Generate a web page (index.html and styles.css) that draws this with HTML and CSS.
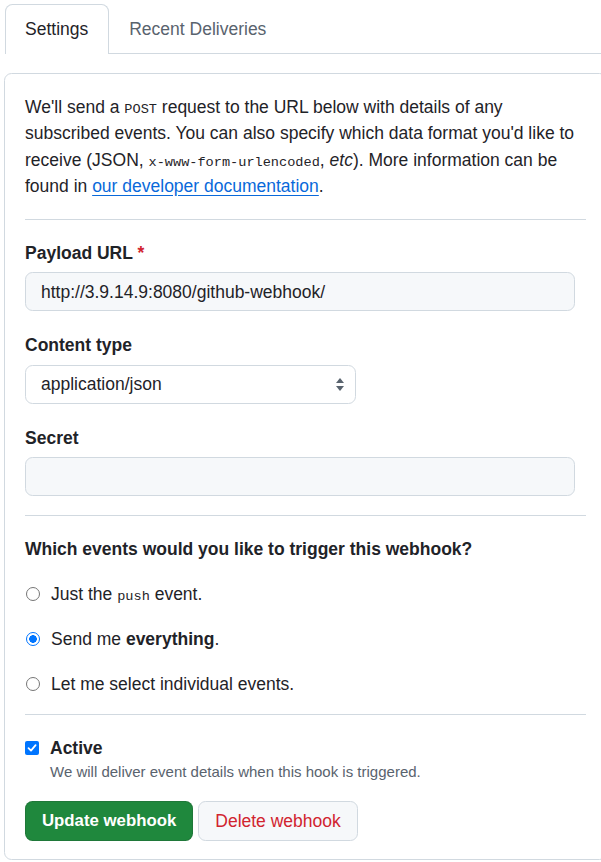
FILE: index.html
```html
<!DOCTYPE html>
<html>
<head>
<meta charset="utf-8">
<link rel="stylesheet" href="styles.css">
</head>
<body>
<div class="page">
  <nav class="tabs">
    <a class="tab selected">Settings</a>
    <a class="tab">Recent Deliveries</a>
  </nav>
  <form class="box">
    <p class="intro">We'll send a <code class="post">POST</code> request to the URL below with details of any subscribed events. You can also specify which data format you'd like to receive (JSON, <code>x-www-form-urlencoded</code>, <em>etc</em>). More information can be found in <a class="link" href="#">our developer documentation</a>.</p>
    <hr class="sep">
    <div class="field">
      <label class="label">Payload URL <span class="req">*</span></label>
      <div class="input">http://3.9.14.9:8080/github-webhook/</div>
    </div>
    <div class="field">
      <label class="label">Content type</label>
      <div class="select">
        <span>application/json</span>
        <svg class="arrows" width="10" height="16" viewBox="0 0 10 16"><path d="M5 2 L9 7 H1 Z" fill="#59636e"/><path d="M5 15 L9 10 H1 Z" fill="#59636e"/></svg>
      </div>
    </div>
    <div class="field">
      <label class="label">Secret</label>
      <div class="input"></div>
    </div>
    <hr class="sep sep2">
    <h3 class="question">Which events would you like to trigger this webhook?</h3>
    <div class="radios">
      <div class="radio-row"><span class="radio"></span><span>Just the <code class="push">push</code> event.</span></div>
      <div class="radio-row"><span class="radio checked"></span><span>Send me <strong>everything</strong>.</span></div>
      <div class="radio-row"><span class="radio"></span><span>Let me select individual events.</span></div>
    </div>
    <hr class="sep sep3">
    <div class="active">
      <span class="checkbox"><svg width="10" height="10" viewBox="0 0 10 10"><path d="M1.5 5.2 L4 7.6 L8.6 2.2" fill="none" stroke="#fff" stroke-width="1.8" stroke-linecap="round" stroke-linejoin="round"/></svg></span>
      <div class="active-text">
        <div class="active-label">Active</div>
        <div class="note">We will deliver event details when this hook is triggered.</div>
      </div>
    </div>
    <div class="buttons">
      <button type="button" class="btn primary">Update webhook</button>
      <button type="button" class="btn danger">Delete webhook</button>
    </div>
  </form>
</div>
</body>
</html>
```
FILE: styles.css
```css
html, body {
  margin: 0;
  padding: 0;
  background: #ffffff;
  overflow: hidden;
}
body {
  font-family: "Liberation Sans", Arial, sans-serif;
  font-size: 17.5px;
  line-height: 26.25px;
  color: #1f2328;
}
.page {
  width: 603px;
  padding: 4px 0 0 4px;
}
.tabs {
  display: flex;
  margin-left: 1px;
  border-bottom: 1px solid #d1d9e0;
}
.tab {
  padding: 11px 20px 11px 19px;
  line-height: 26px;
  border: 1px solid transparent;
  border-bottom: 0;
  border-radius: 7.5px 7.5px 0 0;
  color: #59636e;
  margin-bottom: -1px;
}
.tab.selected {
  color: #1f2328;
  border-color: #d1d9e0;
  background: #fff;
  padding-bottom: 12px;
}
.box {
  display: block;
  margin-top: 19px;
  border: 1px solid #d1d9e0;
  border-radius: 7.5px;
  padding: 20px 20px 18px 20px;
}
.intro {
  margin: 0;
}
code {
  font-family: "Liberation Mono", "DejaVu Sans Mono", monospace;
  font-size: 13.6px;
  line-height: 1;
}
.link {
  color: #0969da;
  text-decoration: underline;
  text-underline-offset: 3px;
}
.sep {
  border: 0;
  border-top: 1px solid #d1d9e0;
  margin: 20px 0 20px 0;
}
.field {
  margin-bottom: 21px;
}
.label {
  display: block;
  font-weight: bold;
  margin-bottom: 6px;
}
.req {
  color: #d1242f;
}
.input {
  width: 550px;
  height: 39px;
  box-sizing: border-box;
  border: 1px solid #d1d9e0;
  border-radius: 7.5px;
  background: #f6f8fa;
  padding: 0 15px;
  display: flex;
  align-items: center;
}
.select {
  width: 331px;
  height: 39px;
  box-sizing: border-box;
  border: 1px solid #d1d9e0;
  border-radius: 7.5px;
  background: #fff;
  padding: 0 10px 0 15px;
  display: flex;
  align-items: center;
  justify-content: space-between;
}
.sep2 {
  margin-top: -2px;
}
.question {
  margin: 0;
  font-size: 17.5px;
  font-weight: bold;
}
.radios {
  display: flex;
  flex-direction: column;
  gap: 18.6px;
  margin-top: 19px;
}
.radio-row {
  display: flex;
  align-items: center;
  gap: 11px;
}
.radio {
  width: 14px;
  height: 14px;
  box-sizing: border-box;
  border: 1px solid #767676;
  border-radius: 50%;
  margin-left: 1px;
}
.radio.checked {
  border: 1.5px solid #0075ff;
  background: radial-gradient(circle, #0075ff 0 3.6px, #fff 4px);
}
.sep3 {
  margin-top: 17px;
}
.active {
  display: flex;
  gap: 11px;
}
.checkbox {
  width: 14px;
  height: 14px;
  margin-top: 6px;
  background: #0075ff;
  border-radius: 2px;
  display: flex;
  align-items: center;
  justify-content: center;
}
.active-label {
  font-weight: bold;
}
.note {
  font-size: 15px;
  line-height: 22px;
  color: #59636e;
}
.buttons {
  display: flex;
  gap: 5px;
  margin-top: 18px;
}
.btn {
  height: 40px;
  padding: 0 16px;
  border-radius: 7.5px;
  font-family: inherit;
  font-size: 17.5px;
  font-weight: bold;
  box-sizing: border-box;
}
.btn.primary {
  background: #1f883d;
  color: #fff;
  font-size: 16.8px;
  border: 1px solid rgba(31, 35, 40, 0.15);
}
.btn.danger {
  background: #f6f8fa;
  color: #d1242f;
  border: 1px solid #d1d9e0;
  font-weight: normal;
}
```
